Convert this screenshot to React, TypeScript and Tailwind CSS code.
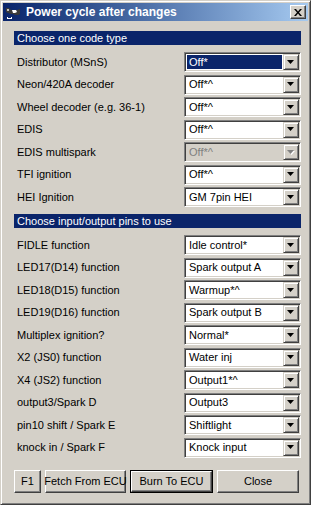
import React from "react"

const FONT = { fontFamily: '"Liberation Sans", Arial, sans-serif' }

type Row = { label: string; value: string; selected?: boolean; disabled?: boolean }

const codeRows: Row[] = [
  { label: "Distributor (MSnS)", value: "Off*", selected: true },
  { label: "Neon/420A decoder", value: "Off*^" },
  { label: "Wheel decoder (e.g. 36-1)", value: "Off*^" },
  { label: "EDIS", value: "Off*^" },
  { label: "EDIS multispark", value: "Off*^", disabled: true },
  { label: "TFI ignition", value: "Off*^" },
  { label: "HEI Ignition", value: "GM 7pin HEI" },
]

const pinRows: Row[] = [
  { label: "FIDLE function", value: "Idle control*" },
  { label: "LED17(D14) function", value: "Spark output A" },
  { label: "LED18(D15) function", value: "Warmup*^" },
  { label: "LED19(D16) function", value: "Spark output B" },
  { label: "Multiplex ignition?", value: "Normal*" },
  { label: "X2 (JS0) function", value: "Water inj" },
  { label: "X4 (JS2) function", value: "Output1*^" },
  { label: "output3/Spark D", value: "Output3" },
  { label: "pin10 shift / Spark E", value: "Shiftlight" },
  { label: "knock in / Spark F", value: "Knock input" },
]

function Arrow({ disabled }: { disabled?: boolean }) {
  return (
    <div className="flex h-full w-[16px] shrink-0 items-center justify-center border border-t-[#d4d0c8] border-l-[#d4d0c8] border-b-[#404040] border-r-[#404040] bg-[#d4d0c8] shadow-[inset_1px_1px_0_#ffffff,inset_-1px_-1px_0_#808080]">
      <svg width="8" height="5" viewBox="0 0 8 5">
        {disabled ? (
          <>
            <path d="M1 1h7l-3.5 4z" fill="#ffffff" />
            <path d="M0 0h7l-3.5 4z" fill="#808080" />
          </>
        ) : (
          <path d="M0 0h7l-3.5 4z" fill="#000000" />
        )}
      </svg>
    </div>
  )
}

function Combo({ row }: { row: Row }) {
  return (
    <div
      className={`flex h-[20px] w-[117px] border border-t-[#808080] border-l-[#808080] border-b-white border-r-white p-[1px] shadow-[inset_1px_1px_0_#404040,inset_-1px_-1px_0_#d4d0c8] ${
        row.disabled ? "bg-[#d4d0c8]" : "bg-white"
      }`}
    >
      <div className="flex min-w-0 flex-1 p-[1px]">
        <div
          className={`flex flex-1 items-center whitespace-nowrap pl-[2px] text-[11px] leading-none ${
            row.selected ? "bg-[#0a246a] text-white" : row.disabled ? "text-[#808080]" : "text-black"
          }`}
        >
          {row.value}
        </div>
      </div>
      <Arrow disabled={row.disabled} />
    </div>
  )
}

function Rows({ rows }: { rows: Row[] }) {
  return (
    <div className="flex flex-col">
      {rows.map((r, i) => (
        <div
          key={r.label}
          className={`flex items-center justify-between ${i % 2 ? "h-[23px]" : "h-[22px]"}`}
        >
          <span className="whitespace-nowrap pl-[3px] text-[11px] text-black">{r.label}</span>
          <Combo row={r} />
        </div>
      ))}
    </div>
  )
}

function Header({ children }: { children: React.ReactNode }) {
  return (
    <div className="flex h-[14px] items-center bg-[#0a246a] pl-[3px] text-[11px] leading-none text-white">
      {children}
    </div>
  )
}

function Btn({ w, label, def }: { w: string; label: string; def?: boolean }) {
  return (
    <div className={`h-[23px] shrink-0 ${w} ${def ? "border border-black" : ""}`}>
      <div className="flex h-full w-full items-center justify-center whitespace-nowrap border border-t-white border-l-white border-b-[#404040] border-r-[#404040] bg-[#d4d0c8] text-[11px] text-black shadow-[inset_-1px_-1px_0_#808080]">
        {label}
      </div>
    </div>
  )
}

function TitleIcon() {
  return (
    <svg width="16" height="16" viewBox="0 0 16 16">
      <path d="M1 4h3l2 2h6l3-1v5l-2 1h-3l-2-1H6L3 9 1 8z" fill="#3a3a3a" />
      <path d="M7 6h4l1 2-2 1H8z" fill="#ffffff" />
      <path d="M2 5h2v2H2z" fill="#c0c0c0" />
      <path d="M2 13h1v1h3v-1h1v2H2z" fill="#ffffff" />
    </svg>
  )
}

export default function App() {
  return (
    <div style={FONT} className="h-[505px] w-[311px] select-none bg-[#d4d0c8]">
      <div className="flex h-full w-full flex-col border border-t-[#d4d0c8] border-l-[#d4d0c8] border-b-[#404040] border-r-[#404040] p-[2px] shadow-[inset_1px_1px_0_#ffffff,inset_-1px_-1px_0_#808080]">
        {/* title bar */}
        <div className="flex h-[18px] shrink-0 items-center bg-gradient-to-r from-[#0a246a] to-[#a6caf0] pl-[2px] pr-[2px]">
          <TitleIcon />
          <span className="ml-[5px] text-[12px] font-bold leading-none text-white">
            Power cycle after changes
          </span>
          <div className="ml-auto flex h-[14px] w-[16px] items-center justify-center border border-t-white border-l-white border-b-[#404040] border-r-[#404040] bg-[#d4d0c8] shadow-[inset_-1px_-1px_0_#808080]">
            <svg width="8" height="7" viewBox="0 0 8 7">
              <path d="M0 0h2l2 2.5L6 0h2L5 3.5 8 7H6L4 4.5 2 7H0l3-3.5z" fill="#000" />
            </svg>
          </div>
        </div>

        {/* content */}
        <div className="flex flex-col pl-[11px] pr-[7px] pt-[10px]">
          <Header>Choose one code type</Header>
          <div className="mt-[6px]">
            <Rows rows={codeRows} />
          </div>
          <div className="mt-[6px]">
            <Header>Choose input/output pins to use</Header>
          </div>
          <div className="mt-[6px]">
            <Rows rows={pinRows} />
          </div>
          <div className="mt-[11px] flex gap-[4px]">
            <Btn w="w-[27px]" label="F1" />
            <Btn w="w-[81px]" label="Fetch From ECU" />
            <Btn w="w-[83px]" label="Burn To ECU" def />
            <Btn w="w-[82px]" label="Close" />
          </div>
        </div>
      </div>
    </div>
  )
}
